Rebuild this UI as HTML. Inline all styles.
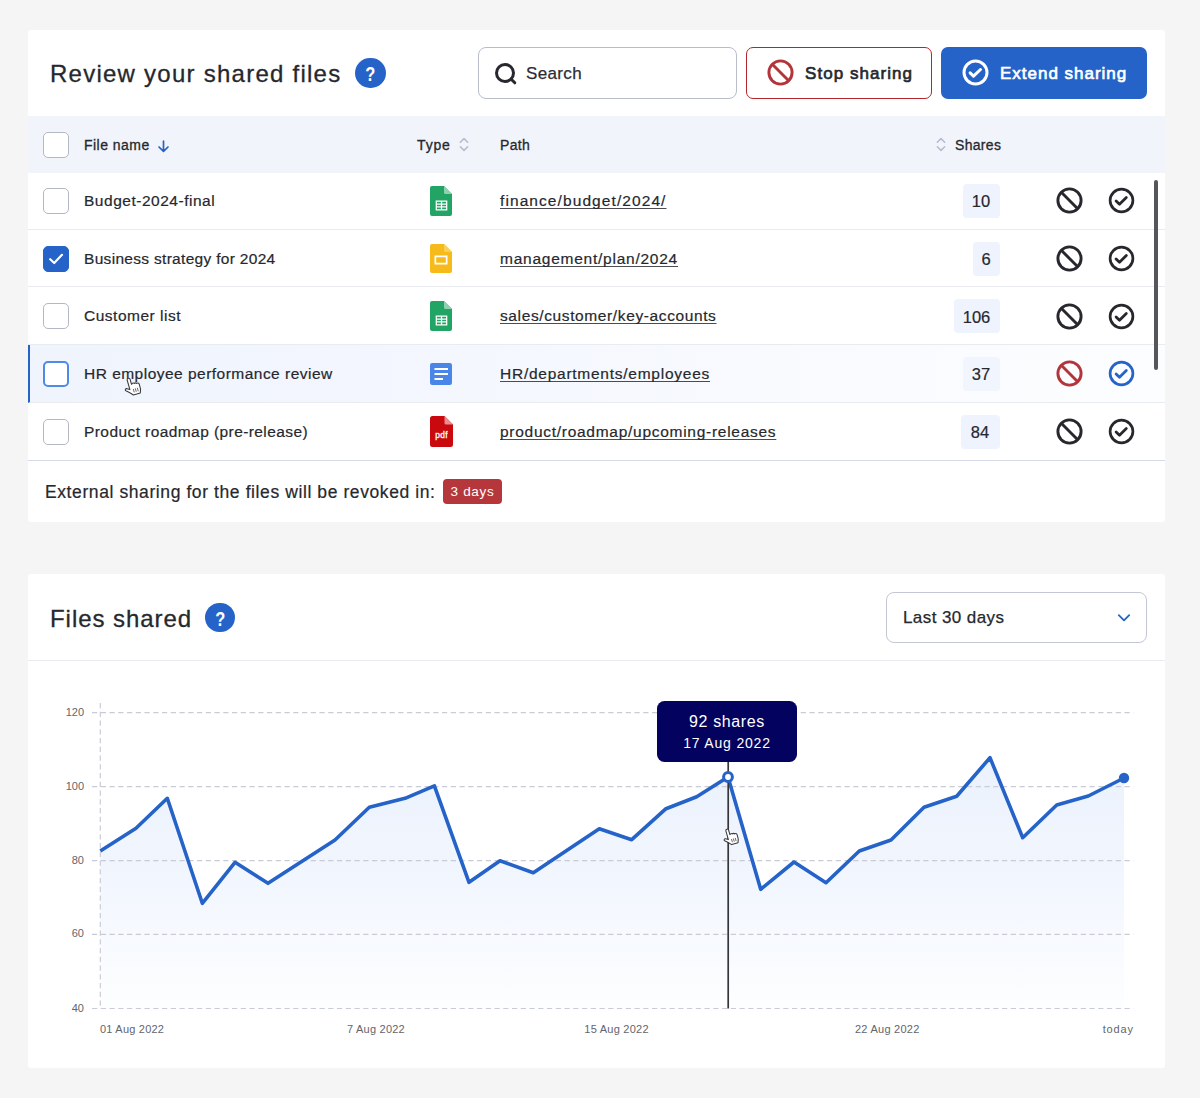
<!DOCTYPE html>
<html lang="en">
<head>
<meta charset="utf-8">
<title>Review your shared files</title>
<style>
*{box-sizing:border-box;margin:0;padding:0}
html,body{width:1200px;height:1098px;overflow:hidden}
body{background:#f5f5f5;font-family:"Liberation Sans",sans-serif;color:#26282d;position:relative}
.card{position:absolute;background:#fff;border-radius:3px}
.abs{position:absolute;white-space:nowrap}
svg{position:absolute;overflow:visible}
#card1{left:28px;top:30px;width:1137px;height:492px}
#card2{left:28px;top:574px;width:1137px;height:494px}
.title{font-size:24px;line-height:30px;color:#26282d;-webkit-text-stroke:0.3px #26282d}
.help{position:absolute;width:30.4px;height:30.4px;margin-top:-0.5px;margin-left:0.4px;border-radius:50%;background:#2563c9;color:#fff;font-weight:bold;font-size:20.5px;line-height:32.5px;text-align:center}
.help span{display:inline-block;transform:scaleX(0.8)}
.search{left:478px;top:47px;width:259px;height:52px;border:1px solid #b9bdc9;border-radius:8px;background:#fff}
.btn{height:52px;border-radius:7px;top:47px}
.btxt{font-size:17px;font-weight:normal;line-height:22px;top:63px;-webkit-text-stroke:0.65px currentColor}
.stop{left:746px;width:186px;border:1.5px solid #b3262d;background:#fff}
.extend{left:941px;width:206px;background:#2563c9}
.thead{left:28px;top:116px;width:1137px;height:57px;background:#f1f4fb}
.th{font-size:14px;line-height:18px;color:#26282d;top:136px;-webkit-text-stroke:0.3px #26282d}
.row{position:absolute;left:28px;width:1137px;border-bottom:1px solid #e9ebf1}
.row.hl{background:linear-gradient(90deg,#eff4fd 0%,#f3f6fe 30%,#f8fafe 65%,#fcfdff 100%);border-left:2px solid #2563c9}
.cb{position:absolute;left:43px;width:26px;height:26px;border:1px solid #b4b8c4;border-radius:5px;background:#fff}
.cb.on{background:#2563c9;border-color:#2563c9}
.cb.hov{border:2px solid #4d8be6}
.name{font-size:15.5px;line-height:20px;left:84px;-webkit-text-stroke:0.2px #26282d}
.path{font-size:15.5px;line-height:20px;left:500px;text-decoration:underline;text-underline-offset:1.7px;text-decoration-thickness:1px;text-decoration-color:#4a4c52;text-decoration-skip-ink:none;-webkit-text-stroke:0.2px #26282d}
.num{position:absolute;height:34px;background:#eef3fd;border-radius:4px;-webkit-text-stroke:0.2px #26282d;font-size:16.5px;line-height:34px;text-align:center}
.foot{-webkit-text-stroke:0.2px #26282d;font-size:17.5px;line-height:22px;left:45px;top:481px}
.badge{left:443px;top:479px;width:59px;height:25px;background:#b5373c;color:#fff;border-radius:4px;font-size:13.5px;line-height:25px;text-align:center}
.sel{left:886px;top:591.5px;width:261px;height:51px;border:1px solid #c3c7d3;border-radius:8px;background:#fff}
.ylab{font-size:11px;line-height:14px;color:#63656d;text-align:right;width:30px;left:54px}
.xlab{font-size:11px;line-height:14px;color:#63656d;top:1022px}
.tip{left:657px;top:701px;width:140px;height:61px;background:#03035f;border-radius:7.5px}
/* width fitting */
#t1{letter-spacing:1.25px}
#t2{letter-spacing:0.365px}
#t3{letter-spacing:1.041px}
#t4{letter-spacing:0.984px}
#t5{letter-spacing:0.466px}
#t6{letter-spacing:0.847px}
#t7{letter-spacing:0.329px}
#t8{letter-spacing:0.308px}
#t9{letter-spacing:0.951px}
#t10{letter-spacing:0.418px}
#n0{letter-spacing:0.52px}
#n1{letter-spacing:0.307px}
#n2{letter-spacing:0.505px}
#n3{letter-spacing:0.478px}
#n4{letter-spacing:0.42px}
#p0{letter-spacing:1.085px}
#p1{letter-spacing:0.756px}
#p2{letter-spacing:0.616px}
#p3{letter-spacing:0.745px}
#p4{letter-spacing:0.723px}
#f1{letter-spacing:0.594px}
#f2{letter-spacing:0.684px}
#x0{letter-spacing:0.22px}
#x1{letter-spacing:0.225px}
#x2{letter-spacing:0.25px}
#x3{letter-spacing:0.25px}
#x4{letter-spacing:0.82px}
#tp1{letter-spacing:0.617px}
#tp2{letter-spacing:0.826px}
</style>
</head>
<body>
<!-- ============ card 1 ============ -->
<div class="card" id="card1"></div>
<div class="abs title" id="t1" style="left:50px;top:59.3px">Review your shared files</div>
<div class="help" style="left:355px;top:58px"><span>?</span></div>

<div class="abs search"></div>
<svg style="left:493px;top:60.7px" width="26" height="26" viewBox="0 0 26 26"><circle cx="12" cy="12" r="8.5" fill="none" stroke="#26282d" stroke-width="3"/><path d="M18.2 18.2 L21.8 21.8" stroke="#26282d" stroke-width="3" stroke-linecap="round"/></svg>
<div class="abs" id="t2" style="left:526px;top:63px;font-size:17px;line-height:22px;color:#2b2d33;-webkit-text-stroke:0.25px #2b2d33">Search</div>

<div class="abs btn stop"></div>
<svg style="left:767px;top:59.3px" width="27" height="27" viewBox="-13.5 -13.5 27 27"><circle r="11.6" fill="none" stroke="#b3343a" stroke-width="2.9"/><path d="M-8.2 -8.2 L8.2 8.2" stroke="#b3343a" stroke-width="2.9"/></svg>
<div class="abs btxt" id="t3" style="left:805px;color:#26282d">Stop sharing</div>

<div class="abs btn extend"></div>
<svg style="left:961.8px;top:59.1px" width="27" height="27" viewBox="-13.5 -13.5 27 27"><circle r="11.5" fill="none" stroke="#fff" stroke-width="3"/><path d="M-5.4 0.4 L-2 3.7 L5 -3" fill="none" stroke="#fff" stroke-width="3" stroke-linecap="round" stroke-linejoin="round"/></svg>
<div class="abs btxt" id="t4" style="left:1000px;color:#fff">Extend sharing</div>

<!-- table head -->
<div class="abs thead"></div>
<div class="cb" style="top:132px"></div>
<div class="abs th" id="t5" style="left:84px">File name</div>
<svg style="left:157.2px;top:139.6px" width="13" height="13" viewBox="0 0 13 13"><path d="M6.5 1.2 V11.2 M2 7 L6.5 11.4 L11 7" fill="none" stroke="#2563c9" stroke-width="1.7" stroke-linecap="round" stroke-linejoin="round"/></svg>
<div class="abs th" id="t6" style="left:417px">Type</div>
<svg style="left:459px;top:137px" width="10" height="15" viewBox="0 0 10 15"><path d="M1.3 5.2 L5 1.6 L8.7 5.2 M1.3 9.8 L5 13.4 L8.7 9.8" fill="none" stroke="#b7bacb" stroke-width="1.5" stroke-linecap="round" stroke-linejoin="round"/></svg>
<div class="abs th" id="t7" style="left:500px">Path</div>
<svg style="left:936px;top:137px" width="10" height="15" viewBox="0 0 10 15"><path d="M1.3 5.2 L5 1.6 L8.7 5.2 M1.3 9.8 L5 13.4 L8.7 9.8" fill="none" stroke="#b7bacb" stroke-width="1.5" stroke-linecap="round" stroke-linejoin="round"/></svg>
<div class="abs th" id="t8" style="left:955px">Shares</div>
<!-- rows -->
<div class="row" style="top:173px;height:57px;border-bottom-color:#e9ebf1"></div>
<div class="cb" style="top:187.5px"></div>
<div class="abs name" id="n0" style="top:190.5px">Budget-2024-final</div>
<svg style="left:430px;top:185.5px" width="22" height="30" viewBox="0 0 22 30"><path d="M2 0 H14 L22 8 V28 a2 2 0 0 1 -2 2 H2 a2 2 0 0 1 -2 -2 V2 a2 2 0 0 1 2 -2 Z" fill="#22a465"/><path d="M14 0 L22 8 H15.5 a1.5 1.5 0 0 1 -1.5 -1.5 Z" fill="#8ed1b0"/><path d="M6.3 15 H16.7 V23.9 H6.3 Z M11.5 15 V23.9 M6.3 18 H16.7 M6.3 20.9 H16.7" fill="none" stroke="#fff" stroke-width="1.25"/></svg>
<div class="abs path" id="p0" style="top:190.5px">finance/budget/2024/</div>
<div class="num" style="left:962.5px;top:183.5px;width:37px;background:#eef3fd"><span style="position:relative;top:0.8px">10</span></div>
<svg style="left:1055.5px;top:187.0px" width="27" height="27" viewBox="-13.5 -13.5 27 27"><circle r="11.6" fill="none" stroke="#26282d" stroke-width="2.9"/><path d="M-8.2 -8.2 L8.2 8.2" stroke="#26282d" stroke-width="2.9"/></svg>
<svg style="left:1108.0px;top:187.0px" width="27" height="27" viewBox="-13.5 -13.5 27 27"><circle r="11.4" fill="none" stroke="#26282d" stroke-width="2.7"/><path d="M-5.4 0.4 L-2 3.7 L4.8 -2.9" fill="none" stroke="#26282d" stroke-width="2.8" stroke-linecap="round" stroke-linejoin="round"/></svg>
<div class="row" style="top:230px;height:57px;border-bottom-color:#e9ebf1"></div>
<div class="cb on" style="top:245.5px"></div>
<svg style="left:43px;top:245.5px" width="26" height="26" viewBox="0 0 26 26"><path d="M7.2 13.2 L11.2 17 L19 8.8" fill="none" stroke="#fff" stroke-width="2.2" stroke-linecap="round" stroke-linejoin="round"/></svg>
<div class="abs name" id="n1" style="top:248.5px">Business strategy for 2024</div>
<svg style="left:430px;top:244.0px" width="22" height="29" viewBox="0 0 22 29"><path d="M2 0 H14 L22 8 V27 a2 2 0 0 1 -2 2 H2 a2 2 0 0 1 -2 -2 V2 a2 2 0 0 1 2 -2 Z" fill="#f6bb1b"/><path d="M14 0 L22 8 H15.5 a1.5 1.5 0 0 1 -1.5 -1.5 Z" fill="#f9cf5a"/><path d="M4.5 11.5 H17.5 V20.5 H4.5 Z M6.2 13.2 V18.8 H15.8 V13.2 Z" fill="#fff" fill-rule="evenodd"/></svg>
<div class="abs path" id="p1" style="top:248.5px">management/plan/2024</div>
<div class="num" style="left:972.5px;top:241.5px;width:27px;background:#eef3fd"><span style="position:relative;top:0.8px">6</span></div>
<svg style="left:1055.5px;top:245.0px" width="27" height="27" viewBox="-13.5 -13.5 27 27"><circle r="11.6" fill="none" stroke="#26282d" stroke-width="2.9"/><path d="M-8.2 -8.2 L8.2 8.2" stroke="#26282d" stroke-width="2.9"/></svg>
<svg style="left:1108.0px;top:245.0px" width="27" height="27" viewBox="-13.5 -13.5 27 27"><circle r="11.4" fill="none" stroke="#26282d" stroke-width="2.7"/><path d="M-5.4 0.4 L-2 3.7 L4.8 -2.9" fill="none" stroke="#26282d" stroke-width="2.8" stroke-linecap="round" stroke-linejoin="round"/></svg>
<div class="row" style="top:287px;height:58px;border-bottom-color:#e9ebf1"></div>
<div class="cb" style="top:303px"></div>
<div class="abs name" id="n2" style="top:306px">Customer list</div>
<svg style="left:430px;top:301px" width="22" height="30" viewBox="0 0 22 30"><path d="M2 0 H14 L22 8 V28 a2 2 0 0 1 -2 2 H2 a2 2 0 0 1 -2 -2 V2 a2 2 0 0 1 2 -2 Z" fill="#22a465"/><path d="M14 0 L22 8 H15.5 a1.5 1.5 0 0 1 -1.5 -1.5 Z" fill="#8ed1b0"/><path d="M6.3 15 H16.7 V23.9 H6.3 Z M11.5 15 V23.9 M6.3 18 H16.7 M6.3 20.9 H16.7" fill="none" stroke="#fff" stroke-width="1.25"/></svg>
<div class="abs path" id="p2" style="top:306px">sales/customer/key-accounts</div>
<div class="num" style="left:953.5px;top:299px;width:46px;background:#eef3fd"><span style="position:relative;top:0.8px">106</span></div>
<svg style="left:1055.5px;top:302.5px" width="27" height="27" viewBox="-13.5 -13.5 27 27"><circle r="11.6" fill="none" stroke="#26282d" stroke-width="2.9"/><path d="M-8.2 -8.2 L8.2 8.2" stroke="#26282d" stroke-width="2.9"/></svg>
<svg style="left:1108.0px;top:302.5px" width="27" height="27" viewBox="-13.5 -13.5 27 27"><circle r="11.4" fill="none" stroke="#26282d" stroke-width="2.7"/><path d="M-5.4 0.4 L-2 3.7 L4.8 -2.9" fill="none" stroke="#26282d" stroke-width="2.8" stroke-linecap="round" stroke-linejoin="round"/></svg>
<div class="row hl" style="top:345px;height:58px;border-bottom-color:#e9ebf1"></div>
<div class="cb hov" style="top:360.5px"></div>
<div class="abs name" id="n3" style="top:363.5px">HR employee performance review</div>
<svg style="left:430px;top:362.5px" width="22" height="22" viewBox="0 0 22 22"><rect width="22" height="22" rx="2.2" fill="#4a86e8"/><path d="M4.5 6 H18 M4.5 11 H18 M4.5 16 H13" stroke="#fff" stroke-width="2.2"/></svg>
<div class="abs path" id="p3" style="top:363.5px">HR/departments/employees</div>
<div class="num" style="left:962.5px;top:356.5px;width:37px;background:#f1f5fd"><span style="position:relative;top:0.8px">37</span></div>
<svg style="left:1055.5px;top:360.0px" width="27" height="27" viewBox="-13.5 -13.5 27 27"><circle r="11.6" fill="none" stroke="#b3343a" stroke-width="2.9"/><path d="M-8.2 -8.2 L8.2 8.2" stroke="#b3343a" stroke-width="2.9"/></svg>
<svg style="left:1108.0px;top:360.0px" width="27" height="27" viewBox="-13.5 -13.5 27 27"><circle r="11.4" fill="none" stroke="#2563c9" stroke-width="2.7"/><path d="M-5.4 0.4 L-2 3.7 L4.8 -2.9" fill="none" stroke="#2563c9" stroke-width="2.8" stroke-linecap="round" stroke-linejoin="round"/></svg>
<div class="row" style="top:403px;height:58px;border-bottom-color:#d6dae6"></div>
<div class="cb" style="top:418.5px"></div>
<div class="abs name" id="n4" style="top:421.5px">Product roadmap (pre-release)</div>
<svg style="left:430px;top:416.0px" width="23" height="31" viewBox="0 0 23 31"><path d="M2.5 0 H14.5 L23 8.5 V28.5 a2.5 2.5 0 0 1 -2.5 2.5 H2.5 a2.5 2.5 0 0 1 -2.5 -2.5 V2.5 a2.5 2.5 0 0 1 2.5 -2.5 Z" fill="#c9090e"/><path d="M14.5 0 L23 8.5 H16 a1.5 1.5 0 0 1 -1.5 -1.5 Z" fill="#e88e90"/><text x="11.5" y="22.3" text-anchor="middle" font-family="Liberation Sans, sans-serif" font-size="8.3" letter-spacing="0.35" fill="#fff" stroke="#fff" stroke-width="0.3">pdf</text></svg>
<div class="abs path" id="p4" style="top:421.5px">product/roadmap/upcoming-releases</div>
<div class="num" style="left:960.5px;top:414.5px;width:39px;background:#eef3fd"><span style="position:relative;top:0.8px">84</span></div>
<svg style="left:1055.5px;top:418.0px" width="27" height="27" viewBox="-13.5 -13.5 27 27"><circle r="11.6" fill="none" stroke="#26282d" stroke-width="2.9"/><path d="M-8.2 -8.2 L8.2 8.2" stroke="#26282d" stroke-width="2.9"/></svg>
<svg style="left:1108.0px;top:418.0px" width="27" height="27" viewBox="-13.5 -13.5 27 27"><circle r="11.4" fill="none" stroke="#26282d" stroke-width="2.7"/><path d="M-5.4 0.4 L-2 3.7 L4.8 -2.9" fill="none" stroke="#26282d" stroke-width="2.8" stroke-linecap="round" stroke-linejoin="round"/></svg>
<div class="abs" style="left:1153.5px;top:180px;width:4.5px;height:190px;border-radius:3px;background:#55565b"></div>
<svg style="left:123.4px;top:375.8px" width="19" height="20.9" viewBox="0 0 20 22"><g transform="rotate(-16 10 13)"><path d="M7 3.2 a1.6 1.6 0 0 1 3.2 0 V8.6 l1 -0.6 a1.5 1.5 0 0 1 2.2 0.6 a1.5 1.5 0 0 1 2.3 0.7 a1.5 1.5 0 0 1 2.3 1.2 V15 c0 2.3 -1 3.3 -1.5 5 H9 C7.5 17.8 5 15.5 2.6 13.5 c-1 -0.9 0.2 -2.6 1.7 -1.8 L7 13.5 Z" fill="#fff" stroke="#3a3a3a" stroke-width="1.15" stroke-linejoin="round"/><path d="M10.6 13.8 v3.8 M12.8 13.8 v3.8 M15 13.8 v3.8" stroke="#555" stroke-width="0.85"/></g></svg>
<div class="abs foot" id="f1">External sharing for the files will be revoked in:</div>
<div class="abs badge" id="f2">3 days</div>
<!-- ============ card 2 ============ -->
<div class="card" id="card2"></div>
<div class="abs title" id="t9" style="left:50px;top:604.2px">Files shared</div>
<div class="help" style="left:204.7px;top:603.3px;width:29.6px;height:29.6px;line-height:31.6px"><span>?</span></div>
<div class="abs" style="left:28px;top:660px;width:1137px;height:1px;background:#e9ebf1"></div>
<div class="abs sel"></div>
<div class="abs" id="t10" style="left:903px;top:607.2px;font-size:17px;line-height:22px;color:#26282d;-webkit-text-stroke:0.25px #26282d">Last 30 days</div>
<svg style="left:1117.3px;top:613.3px" width="14" height="10" viewBox="0 0 14 10"><path d="M1.8 2.2 L7 7.4 L12.2 2.2" fill="none" stroke="#2563c9" stroke-width="1.8" stroke-linecap="round" stroke-linejoin="round"/></svg>
<svg style="left:0;top:0" width="1200" height="1098" viewBox="0 0 1200 1098"><defs><linearGradient id="g" x1="0" y1="0" x2="0" y2="1"><stop offset="0" stop-color="#ebf2fd"/><stop offset="0.5" stop-color="#f2f6fe"/><stop offset="1" stop-color="#fdfeff"/></linearGradient></defs><path d="M100.3 851 L136 828.3 L167.3 798.3 L202.3 903.3 L235 862.3 L268 883.3 L335 840 L369.3 807.3 L405 798.3 L434.4 785.8 L469 882.3 L500 860.7 L533.3 872.7 L599.3 828.7 L631.7 839.7 L666 808.7 L696.7 796.7 L728 777 L760.7 889.3 L794 862 L826 882.7 L859.3 851 L891 840 L924 807.3 L956.7 796.3 L990 757.7 L1022.7 837.7 L1056.7 805 L1088.3 796 L1124 778 L1124 1008.5 L100.3 1008.5 Z" fill="url(#g)"/><path d="M92 712.7 H1133.5" stroke="#c9ccd6" stroke-width="1.2" stroke-dasharray="5.2 3.55" fill="none"/><path d="M92 786.7 H1133.5" stroke="#c9ccd6" stroke-width="1.2" stroke-dasharray="5.2 3.55" fill="none"/><path d="M92 860.7 H1133.5" stroke="#c9ccd6" stroke-width="1.2" stroke-dasharray="5.2 3.55" fill="none"/><path d="M92 934.3 H1133.5" stroke="#c9ccd6" stroke-width="1.2" stroke-dasharray="5.2 3.55" fill="none"/><path d="M92 1008.5 H1133.5" stroke="#c9ccd6" stroke-width="1.2" stroke-dasharray="5.2 3.55" fill="none"/><path d="M100.3 703 V1008.5" stroke="#c9ccd6" stroke-width="1.2" stroke-dasharray="5.2 3.55" fill="none"/><path d="M100.3 851 L136 828.3 L167.3 798.3 L202.3 903.3 L235 862.3 L268 883.3 L335 840 L369.3 807.3 L405 798.3 L434.4 785.8 L469 882.3 L500 860.7 L533.3 872.7 L599.3 828.7 L631.7 839.7 L666 808.7 L696.7 796.7 L728 777 L760.7 889.3 L794 862 L826 882.7 L859.3 851 L891 840 L924 807.3 L956.7 796.3 L990 757.7 L1022.7 837.7 L1056.7 805 L1088.3 796 L1124 778" fill="none" stroke="#2563c9" stroke-width="3.6" stroke-linejoin="round" stroke-linecap="butt"/><path d="M728.2 762 V1008.5" stroke="#35363a" stroke-width="1.7"/><circle cx="728" cy="777" r="4.4" fill="#fff" stroke="#2563c9" stroke-width="3"/><circle cx="1124" cy="778" r="5.2" fill="#2563c9"/></svg>
<div class="abs ylab" style="top:704.7px">120</div>
<div class="abs ylab" style="top:778.7px">100</div>
<div class="abs ylab" style="top:852.7px">80</div>
<div class="abs ylab" style="top:926.3px">60</div>
<div class="abs ylab" style="top:1000.5px">40</div>
<div class="abs xlab" id="x0" style="left:100px">01 Aug 2022</div>
<div class="abs xlab" id="x1" style="left:347px">7 Aug 2022</div>
<div class="abs xlab" id="x2" style="left:584.3px">15 Aug 2022</div>
<div class="abs xlab" id="x3" style="left:855px">22 Aug 2022</div>
<div class="abs xlab" id="x4" style="left:1102.7px">today</div>
<div class="abs tip"></div>
<div class="abs" id="tp1" style="left:657px;width:140px;top:712px;text-align:center;color:#fff;font-size:16px;line-height:20px">92 shares</div>
<div class="abs" id="tp2" style="left:657px;width:140px;top:734px;text-align:center;color:#fff;font-size:14px;line-height:18px">17 Aug 2022</div>
<svg style="left:722px;top:826.6px" width="17.6" height="19.4" viewBox="0 0 20 22"><g transform="rotate(-16 10 13)"><path d="M7 3.2 a1.6 1.6 0 0 1 3.2 0 V8.6 l1 -0.6 a1.5 1.5 0 0 1 2.2 0.6 a1.5 1.5 0 0 1 2.3 0.7 a1.5 1.5 0 0 1 2.3 1.2 V15 c0 2.3 -1 3.3 -1.5 5 H9 C7.5 17.8 5 15.5 2.6 13.5 c-1 -0.9 0.2 -2.6 1.7 -1.8 L7 13.5 Z" fill="#fff" stroke="#3a3a3a" stroke-width="1.2" stroke-linejoin="round"/><path d="M10.6 13.8 v3.8 M12.8 13.8 v3.8 M15 13.8 v3.8" stroke="#555" stroke-width="0.9"/></g></svg>
</body>
</html>
